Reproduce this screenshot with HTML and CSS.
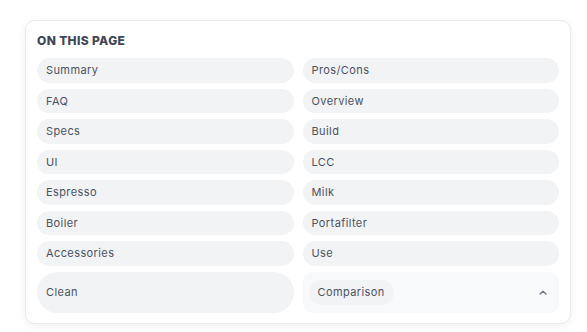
FILE: index.html
```html
<!DOCTYPE html>
<html lang="en">
<head>
<meta charset="utf-8">
<link rel="stylesheet" href="styles.css">
</head>
<body>
<nav class="toc">
  <h2 class="toc-title">ON THIS PAGE</h2>
  <div class="toc-grid">
    <a class="pill">Summary</a>
    <a class="pill">Pros/Cons</a>
    <a class="pill">FAQ</a>
    <a class="pill">Overview</a>
    <a class="pill">Specs</a>
    <a class="pill">Build</a>
    <a class="pill">UI</a>
    <a class="pill">LCC</a>
    <a class="pill">Espresso</a>
    <a class="pill">Milk</a>
    <a class="pill">Boiler</a>
    <a class="pill">Portafilter</a>
    <a class="pill">Accessories</a>
    <a class="pill">Use</a>
    <a class="pill pill-tall">Clean</a>
    <div class="more">
      <a class="pill pill-inner">Comparison</a>
      <svg class="caret" width="8" height="5" viewBox="0 0 8 5"><path d="M1 4 L4 1.2 L7 4" fill="none" stroke="#6b7280" stroke-width="1.3" stroke-linecap="round" stroke-linejoin="round"/></svg>
    </div>
  </div>
</nav>
</body>
</html>
```
FILE: styles.css
```css
html, body {
  margin: 0;
  background: #ffffff;
}
body {
  padding: 20px 16px 8px 25px;
  font-family: "Inter", "Noto Sans", sans-serif;
}
.toc {
  box-sizing: border-box;
  width: 546px;
  height: 304px;
  border: 1px solid #e8eaee;
  border-radius: 10px;
  background: #fff;
  box-shadow: 0 2px 10px rgba(15, 23, 42, 0.06);
  padding: 12px 11px 11px 11px;
}
.toc-title {
  margin: 0 0 9px 0;
  font-size: 12px;
  line-height: 16px;
  font-weight: 800;
  letter-spacing: 0.35px;
  color: #3f4654;
}
.toc-grid {
  display: grid;
  grid-template-columns: 1fr 1fr;
  column-gap: 9px;
  row-gap: 6px;
}
.pill {
  display: flex;
  align-items: center;
  box-sizing: border-box;
  height: 24.5px;
  padding: 0 9px;
  border-radius: 13px;
  background: #f2f3f5;
  color: #4b5260;
  font-size: 11px;
  letter-spacing: 0.4px;
  text-decoration: none;
}
.pill-tall {
  height: 41px;
  border-radius: 21px;
}
.more {
  display: flex;
  align-items: center;
  justify-content: space-between;
  height: 41px;
  box-sizing: border-box;
  padding: 0 12px 0 6px;
  border-radius: 9px;
  background: #f8f9fb;
}
.pill-inner {
  height: 25px;
  padding: 0 9px;
}
.caret {
  display: block;
}
```
